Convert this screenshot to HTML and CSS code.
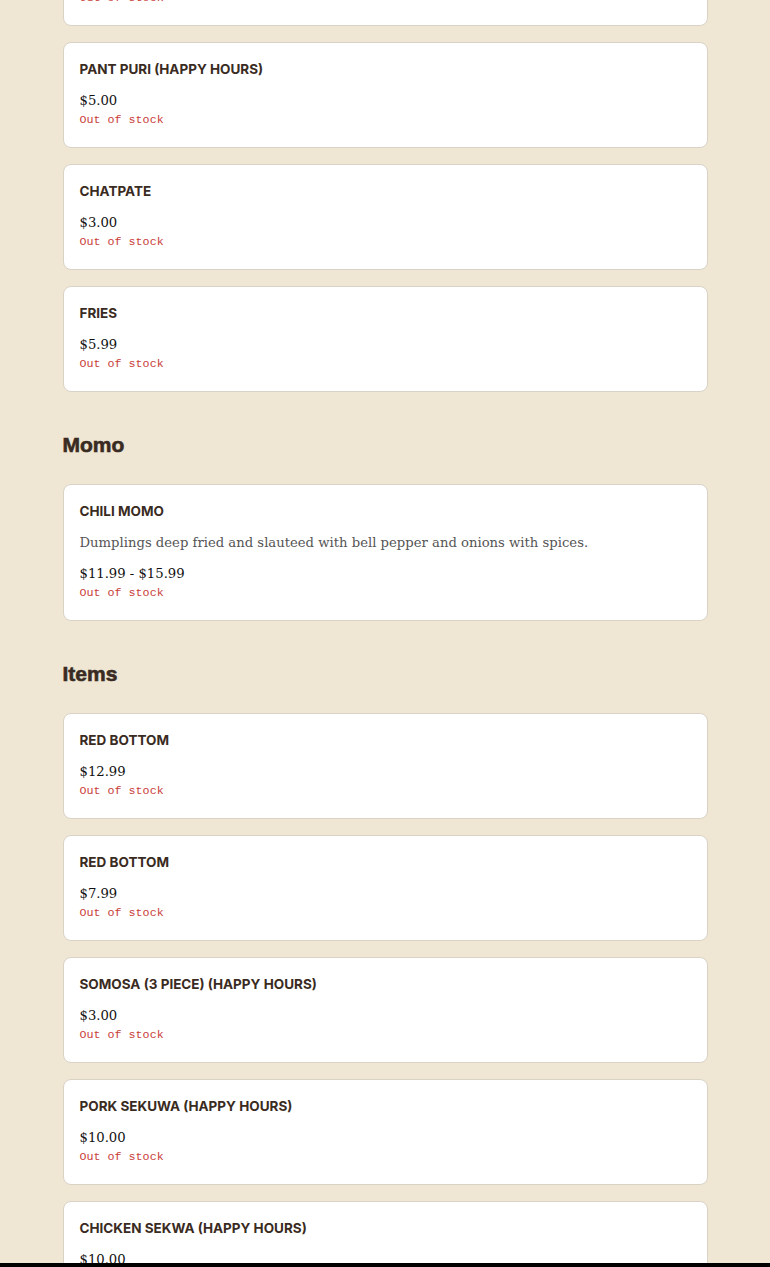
FILE: index.html
```html
<!DOCTYPE html>
<html lang="en">
<head>
    <meta charset="UTF-8">
    <meta name="viewport" content="width=device-width, initial-scale=1.0">
    <title>Menu</title>
    <link rel="stylesheet" href="styles.css">
</head>
<body>
    <div class="menu">
        <div class="section">
            <div class="item">
                <div class="item-name">PANI PURI</div>
                <div class="item-price">$5.00</div>
                <div class="item-stock">Out of stock</div>
            </div>
            <div class="item">
                <div class="item-name">PANT PURI (HAPPY HOURS)</div>
                <div class="item-price">$5.00</div>
                <div class="item-stock">Out of stock</div>
            </div>
            <div class="item">
                <div class="item-name">CHATPATE</div>
                <div class="item-price">$3.00</div>
                <div class="item-stock">Out of stock</div>
            </div>
            <div class="item">
                <div class="item-name">FRIES</div>
                <div class="item-price">$5.99</div>
                <div class="item-stock">Out of stock</div>
            </div>
        </div>

        <div class="section">
            <h2 class="section-title">Momo</h2>
            <div class="item">
                <div class="item-name">CHILI MOMO</div>
                <div class="item-desc">Dumplings deep fried and slauteed with bell pepper and onions with spices.</div>
                <div class="item-price">$11.99 - $15.99</div>
                <div class="item-stock">Out of stock</div>
            </div>
        </div>

        <div class="section">
            <h2 class="section-title">Items</h2>
            <div class="item">
                <div class="item-name">RED BOTTOM</div>
                <div class="item-price">$12.99</div>
                <div class="item-stock">Out of stock</div>
            </div>
            <div class="item">
                <div class="item-name">RED BOTTOM</div>
                <div class="item-price">$7.99</div>
                <div class="item-stock">Out of stock</div>
            </div>
            <div class="item">
                <div class="item-name">SOMOSA (3 PIECE) (HAPPY HOURS)</div>
                <div class="item-price">$3.00</div>
                <div class="item-stock">Out of stock</div>
            </div>
            <div class="item">
                <div class="item-name">PORK SEKUWA (HAPPY HOURS)</div>
                <div class="item-price">$10.00</div>
                <div class="item-stock">Out of stock</div>
            </div>
            <div class="item">
                <div class="item-name">CHICKEN SEKWA (HAPPY HOURS)</div>
                <div class="item-price">$10.00</div>
                <div class="item-stock">Out of stock</div>
            </div>
        </div>
    </div>

    <div class="bottom-bar"></div>
</body>
</html>
```

FILE: styles.css
```css
body {
    margin: 0;
    background-color: #efe6d4;
    font-family: "DejaVu Serif", serif;
    color: #111;
}
.menu {
    max-width: 645px;
    margin: -80px auto 0;
}
.section {
    display: flex;
    flex-direction: column;
    gap: 16px;
    margin-bottom: 41px;
}
.section-title {
    margin: 0 0 11px;
    font-family: "Liberation Sans", Arial, sans-serif;
    font-weight: 900;
    font-size: 21px;
    line-height: 24px;
    color: #3a2b22;
    -webkit-text-stroke: 0.6px #3a2b22;
}
.item {
    background-color: #fff;
    border: 1px solid #d9d3c7;
    border-radius: 8px;
    padding: 16px 16px 18px;
}
.item-name {
    font-family: Inter, "Liberation Sans", sans-serif;
    font-weight: 700;
    font-size: 13.5px;
    line-height: 20px;
    color: #3a2b22;
}
.item-desc {
    margin-top: 12px;
    font-size: 13.2px;
    line-height: 20px;
    color: #555;
}
.item-price {
    margin-top: 12px;
    font-size: 13.2px;
    line-height: 20px;
    color: #111;
}
.item-desc + .item-price {
    margin-top: 11px;
}
.item-stock {
    font-family: "Liberation Mono", monospace;
    font-size: 11.7px;
    line-height: 18px;
    color: #c9403a;
}
.bottom-bar {
    position: fixed;
    left: 0;
    right: 0;
    bottom: 0;
    height: 4px;
    background-color: #000;
}
```
